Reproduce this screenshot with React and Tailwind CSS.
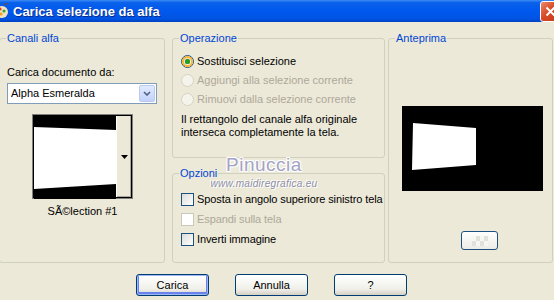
import React from "react";

const font = "font-['Liberation_Sans',Arial,sans-serif]";

const Radio = ({ checked, disabled, label }) => (
  <div className="flex h-[19px] items-center whitespace-nowrap">
    <div
      className={`flex h-[13px] w-[13px] items-center justify-center rounded-full border ${
        disabled
          ? "border-[#D6D3C5] bg-[#F4F3EC]"
          : "border-[#1C5180] bg-[linear-gradient(135deg,#DCDCD7,#FFFFFF)]"
      }`}
    >
      {checked && (
        <div className="flex h-[11px] w-[11px] items-center justify-center rounded-full border-2 border-[#F8B636]">
          <div className="h-[5px] w-[5px] rounded-full bg-[#21A121] shadow-[inset_0_0_1px_#0B6B0B]" />
        </div>
      )}
    </div>
    <span className={`ml-[3px] ${disabled ? "text-[#ACA899]" : "text-black"}`}>{label}</span>
  </div>
);

const Check = ({ disabled, label }) => (
  <div className="flex h-[20px] items-center whitespace-nowrap">
    <div
      className={`h-[13px] w-[13px] shrink-0 border ${
        disabled
          ? "border-[#CAC8BB] bg-white"
          : "border-[#1C5180] bg-[linear-gradient(135deg,#DCDCD7,#FFFFFF)]"
      }`}
    />
    <span className={`ml-[3px] tracking-[-0.1px] ${disabled ? "text-[#ACA899]" : "text-black"}`}>{label}</span>
  </div>
);

const Button = ({ children, primary }) => (
  <button
    className={`h-[22px] w-[73px] rounded-[3px] border border-[#003C74] bg-[linear-gradient(to_bottom,#FFFFFF,#F0F0EA_70%,#D6D0C5)] text-[11px] text-black ${
      primary ? "shadow-[inset_0_0_0_1px_#9DB8F2,inset_0_-1px_0_2px_#6982EE]" : ""
    }`}
  >
    {children}
  </button>
);

const Group = ({ title, className, children }) => (
  <fieldset className={`rounded-[3px] border border-[#D0D0BF] ${className}`}>
    <legend className="ml-[6px] px-[1px] leading-[13px] text-[#0046D5]">{title}</legend>
    {children}
  </fieldset>
);

export default function App() {
  return (
    <div className={`relative h-[300px] w-[554px] overflow-hidden bg-[#ECE9D8] text-[11px] leading-[13px] ${font}`}>
      {/* title bar */}
      <div className="flex h-[22px] items-center justify-between overflow-hidden bg-[linear-gradient(to_bottom,#3D8BF5_0%,#0A61EB_12%,#0058EE_50%,#0054E3_85%,#0041C4_100%)]">
        <div className="flex items-center">
          <svg width="12" height="16" viewBox="0 0 12 16" className="ml-[-4px]">
            <ellipse cx="6" cy="9" rx="6" ry="6" fill="#F3E3C3" />
            <circle cx="4" cy="6" r="1.6" fill="#E23B1F" />
            <circle cx="8" cy="8" r="1.6" fill="#2FA83A" />
            <circle cx="5" cy="11" r="1.6" fill="#F0A020" />
            <path d="M9 2 L11 0" stroke="#8B4513" strokeWidth="1.5" />
          </svg>
          <span className="ml-[5px] pt-[1px] text-[13px] font-bold text-white [text-shadow:1px_1px_0_#0A2A8A]">
            Carica selezione da alfa
          </span>
        </div>
        <div className="mr-[-7px] flex h-[21px] w-[21px] items-center justify-center rounded-[3px] border border-white bg-[linear-gradient(135deg,#E88A6C,#D84A25_45%,#C03A18)]">
          <svg width="11" height="11" viewBox="0 0 11 11">
            <path d="M1.5 1.5 L9.5 9.5 M9.5 1.5 L1.5 9.5" stroke="white" strokeWidth="2" />
          </svg>
        </div>
      </div>

      {/* groups */}
      <div className="mt-[10px] flex h-[231px]">
        <Group title="Canali alfa" className="ml-[-1px] h-[231px] w-[166px]">
          <div className="pl-[7px]">
            <div className="mt-[21px]">Carica documento da:</div>
            <div className="mt-[4px] flex h-[21px] w-[150px] items-center justify-between border border-[#7F9DB9] bg-white pl-[3px] pr-[1px]">
              <span>Alpha Esmeralda</span>
              <div className="flex h-[17px] w-[16px] items-center justify-center rounded-[2px] border border-[#B9C9EF] bg-[linear-gradient(to_bottom,#E1EAFE,#C1D3FB)]">
                <svg width="8" height="5" viewBox="0 0 8 5">
                  <path d="M1 1 L4 4 L7 1" stroke="#4D6185" strokeWidth="1.6" fill="none" />
                </svg>
              </div>
            </div>
            <div className="ml-[25px] mt-[10px] flex h-[85px] w-[101px] border border-[#808080] bg-black p-[1px]">
              <svg width="82" height="83" viewBox="0 0 82 83" className="block">
                <rect width="82" height="83" fill="black" />
                <polygon points="0,11 82,14 82,68 0,73" fill="white" />
              </svg>
              <div className="flex w-[15px] items-center justify-center border-l border-[#FFFFFF] bg-[#ECE9D8] shadow-[inset_-1px_-1px_0_#ACA899]">
                <svg width="7" height="4" viewBox="0 0 7 4">
                  <path d="M0 0 L7 0 L3.5 4 Z" fill="black" />
                </svg>
              </div>
            </div>
            <div className="ml-[25px] mt-[6px] w-[101px] text-center">SÃ©lection #1</div>
          </div>
        </Group>

        <div className="ml-[7px] flex w-[213px] flex-col">
          <Group title="Operazione" className="h-[126px] w-[213px]">
            <div className="pl-[8px]">
              <div className="mt-[7px]">
                <Radio checked label="Sostituisci selezione" />
                <Radio disabled label="Aggiungi alla selezione corrente" />
                <Radio disabled label="Rimuovi dalla selezione corrente" />
              </div>
              <div className="mt-[4px]">
                Il rettangolo del canale alfa originale
                <br />
                interseca completamente la tela.
              </div>
            </div>
          </Group>
          <Group title="Opzioni" className="mt-[9px] h-[96px] w-[213px]">
            <div className="mt-[9px] pl-[8px]">
              <Check label="Sposta in angolo superiore sinistro tela" />
              <Check disabled label="Espandi sulla tela" />
              <Check label="Inverti immagine" />
            </div>
          </Group>
        </div>

        <Group title="Anteprima" className="ml-[3px] h-[231px] w-[165px]">
          <div className="ml-[13px] mt-[61px] h-[85px] w-[141px]">
            <svg width="141" height="85" viewBox="0 0 141 85" className="block">
              <rect width="141" height="85" fill="black" />
              <polygon points="11,17 74,22 74,59 10,64" fill="white" />
            </svg>
          </div>
          <div className="ml-[72px] mt-[40px] flex h-[19px] w-[37px] items-center justify-center rounded-[3px] border border-[#1D4F80] bg-[linear-gradient(to_bottom,#FFFFFF,#ECEBE6)]">
            <svg width="16" height="10" viewBox="0 0 16 10">
              <rect x="0" y="0" width="4" height="5" fill="#F7F7F4" />
              <rect x="8" y="0" width="4" height="5" fill="#F7F7F4" />
              <rect x="4" y="5" width="4" height="5" fill="#F7F7F4" />
              <rect x="12" y="5" width="4" height="5" fill="#F7F7F4" />
              <rect x="4" y="0" width="4" height="5" fill="#E2E1DA" />
              <rect x="0" y="5" width="4" height="5" fill="#E2E1DA" />
              <rect x="12" y="0" width="4" height="5" fill="#E2E1DA" />
              <rect x="8" y="5" width="4" height="5" fill="#E2E1DA" />
            </svg>
          </div>
        </Group>
      </div>

      {/* buttons */}
      <div className="mt-[11px] flex gap-[26px] pl-[136px]">
        <Button primary>Carica</Button>
        <Button>Annulla</Button>
        <Button>?</Button>
      </div>

      {/* watermark */}
      <div className="pointer-events-none absolute left-[203px] top-[155px] w-[122px] text-center">
        <div className="text-[19px] leading-[20px] tracking-[0.5px] text-[#A3A3C4] [text-shadow:1px_1px_0_#fff,-1px_-1px_0_#fff,1px_-1px_0_#fff,-1px_1px_0_#fff]">
          Pinuccia
        </div>
        <div className="mt-[3px] text-[10px] italic leading-[11px] tracking-[0.3px] text-[#8E8EA6] [text-shadow:1px_1px_0_#fff,-1px_-1px_0_#fff]">
          www.maidiregrafica.eu
        </div>
      </div>
    </div>
  );
}
